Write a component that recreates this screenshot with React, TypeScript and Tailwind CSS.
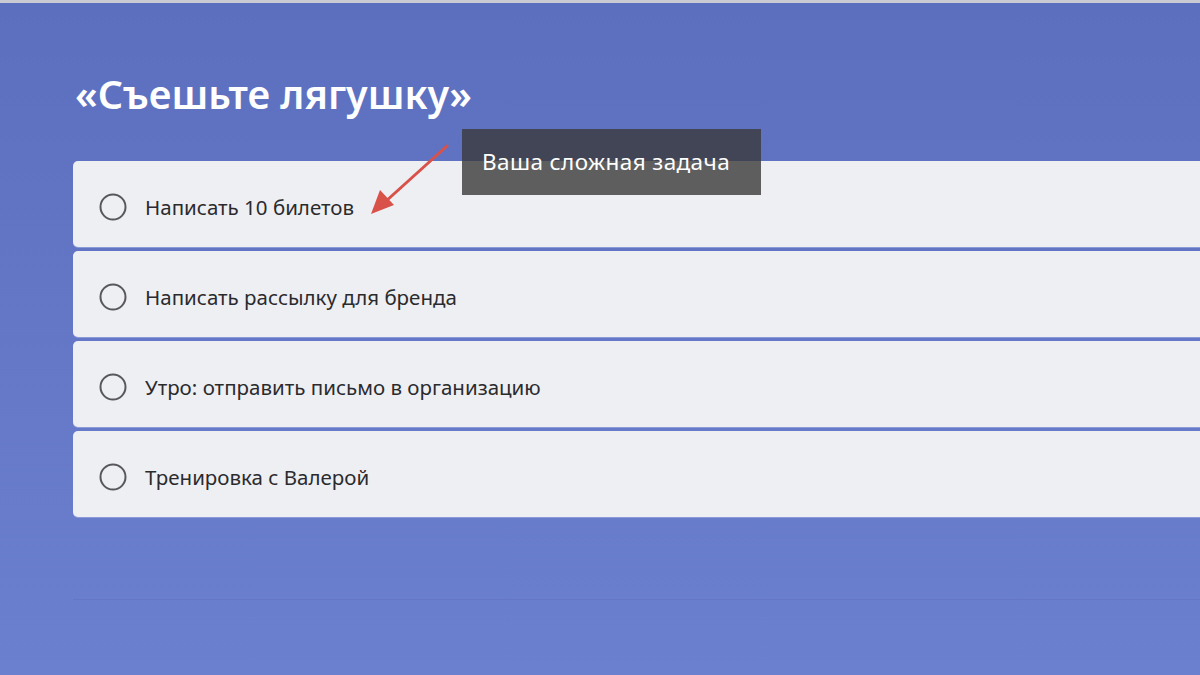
import React from "react";

const tasks = [
  "Написать 10 билетов",
  "Написать рассылку для бренда",
  "Утро: отправить письмо в организацию",
  "Тренировка с Валерой",
];

function Circle() {
  return (
    <svg width="28" height="28" viewBox="0 0 28 28" className="shrink-0">
      <circle cx="14" cy="14" r="12.5" fill="none" stroke="#58585c" strokeWidth="2" />
    </svg>
  );
}

export default function App() {
  return (
    <div
      className="relative h-[675px] w-[1200px] overflow-hidden bg-gradient-to-b from-[#5c6fbf] to-[#6b80ce]"
      style={{ fontFamily: '"Noto Sans", "Open Sans", sans-serif' }}
    >
      <div className="h-[3px] bg-[#c9cad2]" />
      <div className="pl-[73px]">
        <h1 className="ml-[2px] mt-[68px] text-[39.5px] font-semibold leading-[46px] text-white">
          «Съешьте лягушку»
        </h1>
        <div className="mt-[44px] flex flex-col gap-[4px]">
          {tasks.map((t) => (
            <div
              key={t}
              className="flex h-[86px] items-center gap-[18px] rounded-l-[5px] bg-[#eeeff3] pl-[26px] pt-[6px] shadow-[0_1px_0_#8b9bd8]"
            >
              <Circle />
              <span className="text-[20.5px] text-[#2b2b2e]">{t}</span>
            </div>
          ))}
        </div>
        <div className="mt-[82px] border-t border-[#6377c4]" />
      </div>

      {/* tooltip */}
      <div className="absolute left-[462px] top-[129px] flex h-[66px] w-[299px] items-center bg-[rgba(57,57,57,0.8)] pl-[20px] text-[22.5px] tracking-[0.4px] text-white">
        Ваша сложная задача
      </div>

      {/* arrow */}
      <svg className="absolute left-0 top-0" width="1200" height="675" viewBox="0 0 1200 675">
        <line x1="447" y1="146" x2="385" y2="202" stroke="#d9524a" strokeWidth="3" strokeLinecap="round" />
        <polygon points="371,214 380,190 394,205" fill="#d9524a" />
      </svg>
    </div>
  );
}
